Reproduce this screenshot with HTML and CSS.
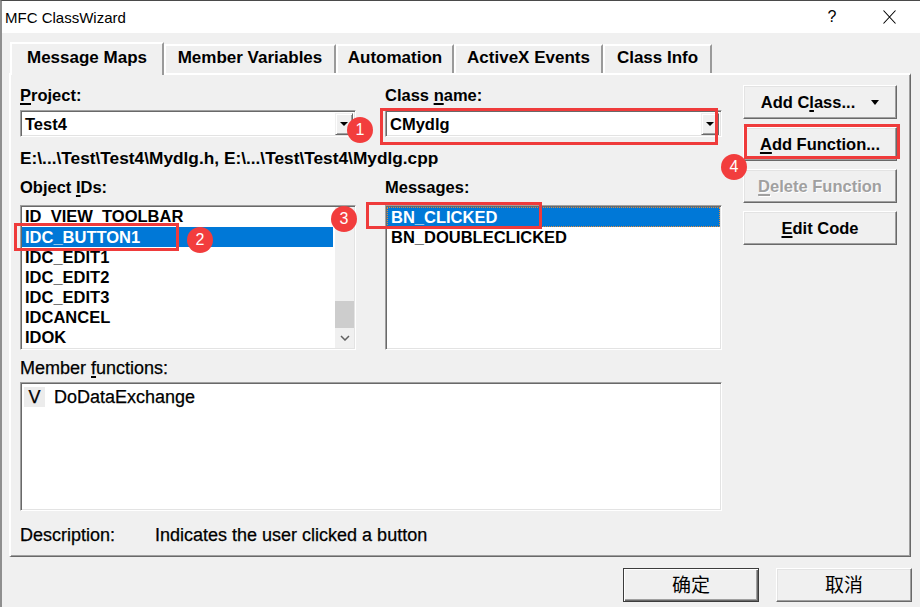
FILE: index.html
```html
<!DOCTYPE html>
<html>
<head>
<meta charset="utf-8">
<title>MFC ClassWizard</title>
<link rel="stylesheet" href="styles.css">
</head>
<body>
<div class="dialog">
  <div class="titlebar">
    <span class="title">MFC ClassWizard</span>
    <span class="tb-btn help">?</span>
    <span class="tb-btn close"><svg width="13" height="14" viewBox="0 0 13 14"><path d="M0.5 0.5L12.5 13.5M12.5 0.5L0.5 13.5" stroke="#000" stroke-width="1.1" fill="none"/></svg></span>
  </div>
  <div class="client">
    <div class="tabs">
      <div class="tab active t1">Message Maps</div>
      <div class="tab t2">Member Variables</div>
      <div class="tab t3">Automation</div>
      <div class="tab t4">ActiveX Events</div>
      <div class="tab t5">Class Info</div>
    </div>
    <div class="panel">
      <div class="main">
        <div class="lbl"><u>P</u>roject:</div>
        <div class="lbl">Class <u>n</u>ame:</div>
        <div class="combo"><span class="combo-text">Test4</span><span class="dd"></span></div>
        <div class="combo"><span class="combo-text">CMydlg</span><span class="dd"></span></div>
        <div class="path">E:\...\Test\Test4\Mydlg.h, E:\...\Test\Test4\Mydlg.cpp</div>
        <div class="lbl sec">Object <u>I</u>Ds:</div>
        <div class="lbl sec">Messages:</div>
        <div class="list">
          <div class="items ids">
            <div class="item first">ID_VIEW_TOOLBAR</div>
            <div class="item sel">IDC_BUTTON1</div>
            <div class="item">IDC_EDIT1</div>
            <div class="item">IDC_EDIT2</div>
            <div class="item">IDC_EDIT3</div>
            <div class="item">IDCANCEL</div>
            <div class="item">IDOK</div>
          </div>
          <div class="vscroll">
            <div class="track"></div>
            <div class="thumb"></div>
            <div class="arrow"><svg width="10" height="6" viewBox="0 0 10 6"><path d="M1 1L5 5L9 1" stroke="#606060" stroke-width="1.5" fill="none"/></svg></div>
          </div>
        </div>
        <div class="list">
          <div class="items msgs">
            <div class="item sel focus">BN_CLICKED</div>
            <div class="item">BN_DOUBLECLICKED</div>
          </div>
        </div>
        <div class="nar mf-lbl">Member <u>f</u>unctions:</div>
        <div class="mlist">
          <div class="mrow"><span class="vcell nar">V</span><span class="nar fname">DoDataExchange</span></div>
        </div>
        <div class="desc nar"><span class="desc-lbl">Description:</span><span>Indicates the user clicked a button</span></div>
      </div>
      <div class="side">
        <div class="btn"><span>Add C<u>l</u>ass...</span><span class="tri"></span></div>
        <div class="btn"><span><u>A</u>dd Function...</span></div>
        <div class="btn disabled"><span><u>D</u>elete Function</span></div>
        <div class="btn"><span><u>E</u>dit Code</span></div>
      </div>
    </div>
    <div class="footer">
      <div class="fbtn default">确定</div>
      <div class="fbtn">取消</div>
    </div>
  </div>
</div>

<div class="rbox b1"></div>
<div class="rbox b2"></div>
<div class="rbox b3"></div>
<div class="rbox b4"></div>
<div class="badge c1">1</div>
<div class="badge c2">2</div>
<div class="badge c3">3</div>
<div class="badge c4">4</div>
</body>
</html>
```
FILE: styles.css
```css
* { box-sizing: border-box; }
html, body { margin: 0; padding: 0; }
body {
  position: relative;
  width: 920px;
  height: 607px;
  overflow: hidden;
  background: #f0f0f0;
  font-family: "Liberation Sans", Arial, sans-serif;
  color: #000;
}
u { text-decoration: underline; text-underline-offset: 2px; text-decoration-thickness: 1.5px; }

.dialog {
  width: 920px;
  height: 607px;
  border-top: 1px solid #4a4a4a;
  border-left: 2px solid #8f8f8f;
  background: #f0f0f0;
  display: flex;
  flex-direction: column;
}

/* title bar */
.titlebar {
  flex: none;
  height: 32px;
  background: #fff;
  display: flex;
  align-items: center;
}
.title { flex: 1; padding-left: 3px; font-size: 15px; }
.tb-btn { width: 46px; display: flex; justify-content: center; align-items: center; font-size: 16px; }
.help { margin-right: 11px; }
.close { margin-right: 8px; }

/* client */
.client { padding-top: 9px; }

.tabs {
  display: flex;
  height: 33px;
  margin-left: 8px;
  margin-bottom: -2px;
  position: relative;
  z-index: 1;
}
.tab {
  height: 29px;
  margin-top: 2px;
  padding-bottom: 3px;
  font-weight: bold;
  font-size: 17px;
  display: flex;
  align-items: center;
  justify-content: center;
  border-top: 2px solid #fff;
  border-left: 2px solid #fff;
  border-right: 2px solid #9a9a9a;
  background: #f0f0f0;
  white-space: nowrap;
}
.tab.active { height: 33px; margin-top: 0; }
.t1 { width: 154px; }
.t2 { width: 172px; }
.t3 { width: 118px; }
.t4 { width: 149px; }
.t5 { width: 109px; }

.panel {
  margin-left: 7px;
  width: 902px;
  border-top: 2px solid #fff;
  border-left: 2px solid #fff;
  border-right: 1px solid #696969;
  border-bottom: 1px solid #696969;
  box-shadow: inset -1px -1px 0 #a0a0a0;
  padding: 10px 13px 11px 9px;
  display: flex;
  align-items: flex-start;
}

.main {
  width: 702px;
  display: grid;
  grid-template-columns: 336px 337px;
  column-gap: 29px;
  align-content: start;
}

.lbl {
  font-weight: bold;
  font-size: 16.5px;
  line-height: 20px;
  height: 20px;
  white-space: nowrap;
}
.lbl.sec { margin-top: 9px; }

.combo {
  margin-top: 5px;
  height: 27px;
  background: #fff;
  border: 1px solid;
  border-color: #a0a0a0 #fff #fff #a0a0a0;
  box-shadow: inset 1px 1px 0 #696969, inset -1px -1px 0 #e3e3e3;
  padding: 2px 2px 1px 1px;
  display: flex;
  align-items: center;
}
.combo-text {
  flex: 1;
  padding-left: 3px;
  font-weight: bold;
  font-size: 16.5px;
}
.dd {
  width: 18px;
  align-self: stretch;
  background: #f0f0f0;
  border: 1px solid;
  border-color: #f0f0f0 #696969 #696969 #f0f0f0;
  box-shadow: inset 1px 1px 0 #fff, inset -1px -1px 0 #a0a0a0;
  display: flex;
  align-items: center;
  justify-content: center;
}
.dd::after {
  content: "";
  border-left: 4px solid transparent;
  border-right: 4px solid transparent;
  border-top: 4px solid #000;
}

.path {
  grid-column: 1 / 3;
  margin-top: 11px;
  line-height: 20px;
  height: 20px;
  font-weight: bold;
  font-size: 17.3px;
  white-space: nowrap;
}

.list {
  margin-top: 8px;
  height: 145px;
  background: #fff;
  border: 1px solid;
  border-color: #a0a0a0 #fff #fff #a0a0a0;
  box-shadow: inset 1px 1px 0 #696969, inset -1px -1px 0 #e3e3e3;
  padding: 1px;
  display: flex;
  overflow: hidden;
}
.items { flex: 1; overflow: hidden; }
.item {
  height: 20px;
  line-height: 20px;
  padding-left: 3px;
  font-weight: bold;
  font-size: 16.5px;
  white-space: nowrap;
}
.ids .first { line-height: 18px; }
.msgs .item { padding-left: 4px; }
.item.sel { background: #0078d7; color: #fff; }
.item.focus { outline: 1px dotted #e08a3a; outline-offset: -1px; }

.vscroll {
  width: 19px;
  margin-left: 2px;
  display: flex;
  flex-direction: column;
  background: #f0f0f0;
}
.vscroll .track { flex: 1; }
.vscroll .thumb { height: 27px; background: #cdcdcd; }
.vscroll .arrow { height: 20px; display: flex; align-items: center; justify-content: center; }

.nar {
  font-size: 18px;
  -webkit-text-stroke: 0.25px #000;
}
.mf-lbl {
  grid-column: 1 / 3;
  margin-top: 8px;
  height: 20px;
  line-height: 20px;
}
.mlist {
  grid-column: 1 / 3;
  margin-top: 4px;
  height: 129px;
  background: #fff;
  border: 1px solid;
  border-color: #a0a0a0 #fff #fff #a0a0a0;
  box-shadow: inset 1px 1px 0 #696969, inset -1px -1px 0 #e3e3e3;
  padding: 4px 1px 1px 3px;
}
.mrow { display: flex; height: 20px; line-height: 20px; }
.vcell { width: 21px; height: 20px; background: #ececec; text-align: center; }
.fname { margin-left: 9px; }

.desc {
  grid-column: 1 / 3;
  margin-top: 14px;
  height: 20px;
  line-height: 20px;
  display: flex;
  white-space: nowrap;
}
.desc-lbl { width: 135px; }

.side {
  margin-left: 21px;
  width: 154px;
  display: flex;
  flex-direction: column;
  gap: 8px;
}
.btn {
  height: 34px;
  display: flex;
  align-items: center;
  justify-content: center;
  gap: 16px;
  font-weight: bold;
  font-size: 16.5px;
  background: #f0f0f0;
  border: 1px solid;
  border-color: #fff #696969 #696969 #fff;
  box-shadow: inset -1px -1px 0 #a0a0a0, inset 1px 1px 0 #e3e3e3;
  white-space: nowrap;
}
.btn.disabled { color: #a0a0a0; text-shadow: 1px 1px 0 #fff; }
.tri {
  width: 0;
  height: 0;
  border-left: 4px solid transparent;
  border-right: 4px solid transparent;
  border-top: 5px solid #000;
}

.footer {
  display: flex;
  justify-content: flex-end;
  gap: 17px;
  padding-right: 8px;
  margin-top: 11px;
}
.fbtn {
  width: 136px;
  height: 34px;
  display: flex;
  align-items: center;
  justify-content: center;
  padding-bottom: 3px;
  font-family: "Noto Sans CJK SC", sans-serif;
  font-size: 19px;
  background: #f0f0f0;
  border: 1px solid;
  border-color: #fff #696969 #696969 #fff;
  box-shadow: inset -1px -1px 0 #a0a0a0, inset 1px 1px 0 #e3e3e3;
}
.fbtn.default {
  border-color: #3c3c3c;
  box-shadow: inset 1px 1px 0 #fff, inset -1px -1px 0 #696969, inset -2px -2px 0 #a0a0a0;
}

/* annotations */
.rbox { position: absolute; border: 3px solid #ef3b3b; }
.b1 { left: 380px; top: 108px; width: 338px; height: 37px; }
.b2 { left: 14px; top: 223px; width: 165px; height: 28px; }
.b3 { left: 366px; top: 202px; width: 176px; height: 27px; }
.b4 { left: 744px; top: 124px; width: 156px; height: 35px; }
.badge {
  position: absolute;
  width: 26px;
  height: 26px;
  border-radius: 50%;
  background: #f23d3d;
  color: #fff;
  font-size: 16px;
  display: flex;
  align-items: center;
  justify-content: center;
}
.c1 { left: 347px; top: 117px; }
.c2 { left: 187px; top: 227px; }
.c3 { left: 331px; top: 206px; }
.c4 { left: 721px; top: 154px; }
```
